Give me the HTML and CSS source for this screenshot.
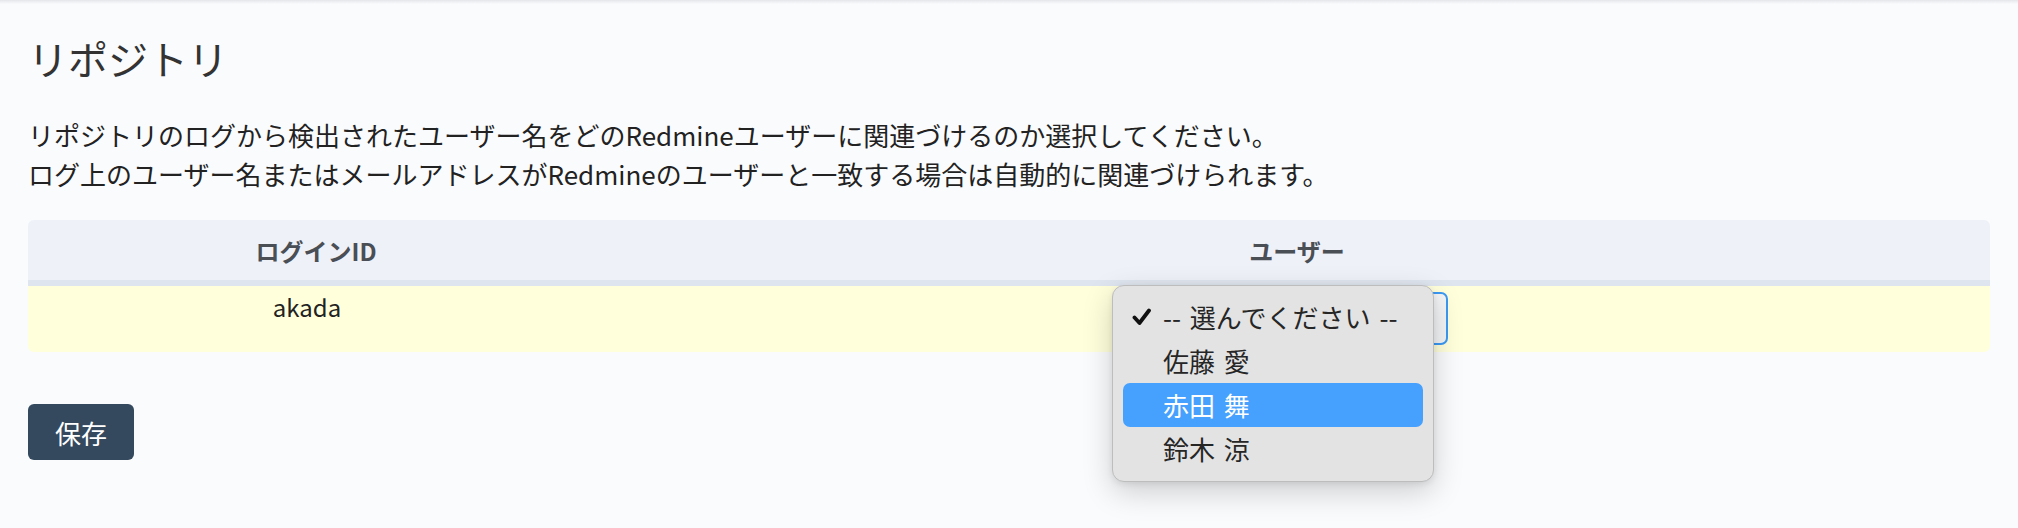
FILE: index.html
```html
<!DOCTYPE html>
<html lang="ja">
<head>
<meta charset="utf-8">
<title>リポジトリ</title>
<link rel="stylesheet" href="styles.css">
</head>
<body>
<div class="topbar"></div>
<main class="content">
  <h2 class="title">リポジトリ</h2>
  <p class="desc">リポジトリのログから検出されたユーザー名をどのRedmineユーザーに関連づけるのか選択してください。<br>ログ上のユーザー名またはメールアドレスがRedmineのユーザーと一致する場合は自動的に関連づけられます。</p>
  <table class="list">
    <thead>
      <tr><th class="col-login">ログインID</th><th class="col-user">ユーザー</th></tr>
    </thead>
    <tbody>
      <tr class="row">
        <td class="login">akada</td>
        <td class="user">
          <div class="select">
            <div class="menu">
              <div class="item checked">
                <svg class="check" width="20" height="18" viewBox="0 0 20 18"><path d="M2.5 9.5 L7.5 15 L17 2.5" fill="none" stroke="#111" stroke-width="3.8" stroke-linecap="round" stroke-linejoin="round"/></svg>
                <span>-- 選んでください --</span>
              </div>
              <div class="item">佐藤 愛</div>
              <div class="item active">赤田 舞</div>
              <div class="item">鈴木 涼</div>
            </div>
          </div>
        </td>
      </tr>
    </tbody>
  </table>
  <button class="btn">保存</button>
</main>
</body>
</html>
```

FILE: styles.css
```css
html, body {
  margin: 0;
  padding: 0;
}
body {
  background: #fafbfd;
  font-family: "Noto Sans CJK JP", "Noto Sans", sans-serif;
  color: #333;
  height: 528px;
  overflow: hidden;
}
.topbar {
  height: 4px;
  background: linear-gradient(#e4e6ea, #fafbfd);
}
.content {
  padding: 0 28px;
}
.title {
  margin: 34px 0 0;
  font-size: 40px;
  line-height: 1;
  font-weight: normal;
  color: #333;
}
.desc {
  margin: 37px 0 0;
  font-size: 26px;
  line-height: 39px;
  color: #222;
}
.list {
  margin-top: 27px;
  width: 100%;
  border-collapse: separate;
  border-spacing: 0;
}
.list th {
  background: #eef1f8;
  height: 60px;
  padding: 0;
  font-size: 24px;
  font-weight: bold;
  color: #4a4e55;
  border-bottom: 6px solid #dfe5ee;
  text-align: center;
  vertical-align: middle;
}
.list th.col-login {
  width: 576px;
  border-top-left-radius: 6px;
}
.list th.col-user {
  border-top-right-radius: 6px;
}
.list td {
  background: #ffffdc;
  padding: 6px 0 7px;
  vertical-align: top;
  text-align: center;
  font-size: 24px;
  line-height: 30px;
  color: #222;
}
.list td.login {
  padding-right: 18px;
  border-bottom-left-radius: 6px;
}
.list td.user {
  border-bottom-right-radius: 6px;
}
.select {
  position: relative;
  width: 302px;
  height: 53px;
  margin: 0 auto;
  box-sizing: border-box;
  border: 2px solid #3b99f4;
  border-radius: 7px;
  background: #f3f4f6;
  text-align: left;
}
.menu {
  position: absolute;
  left: -36px;
  top: -9px;
  width: 322px;
  height: 197px;
  box-sizing: border-box;
  padding: 9px 10px 12px;
  background: #e3e3e3;
  border: 1px solid #bdbdbd;
  border-radius: 12px;
  box-shadow: 0 10px 30px rgba(0, 0, 0, 0.18), 0 2px 6px rgba(0, 0, 0, 0.08);
  font-family: "Noto Sans CJK JP", sans-serif;
}
.item {
  position: relative;
  height: 44px;
  line-height: 44px;
  padding-left: 40px;
  border-radius: 7px;
  font-size: 26px;
  color: #262626;
  word-spacing: 3px;
}
.item.active {
  background: #46a0fd;
  color: #fff;
}
.check {
  position: absolute;
  left: 9px;
  top: 13px;
}
.btn {
  margin-top: 52px;
  width: 106px;
  height: 56px;
  border: none;
  border-radius: 6px;
  background: #34495e;
  color: #fff;
  font-family: "Noto Sans CJK JP", sans-serif;
  font-size: 26px;
  padding: 0;
}
```
